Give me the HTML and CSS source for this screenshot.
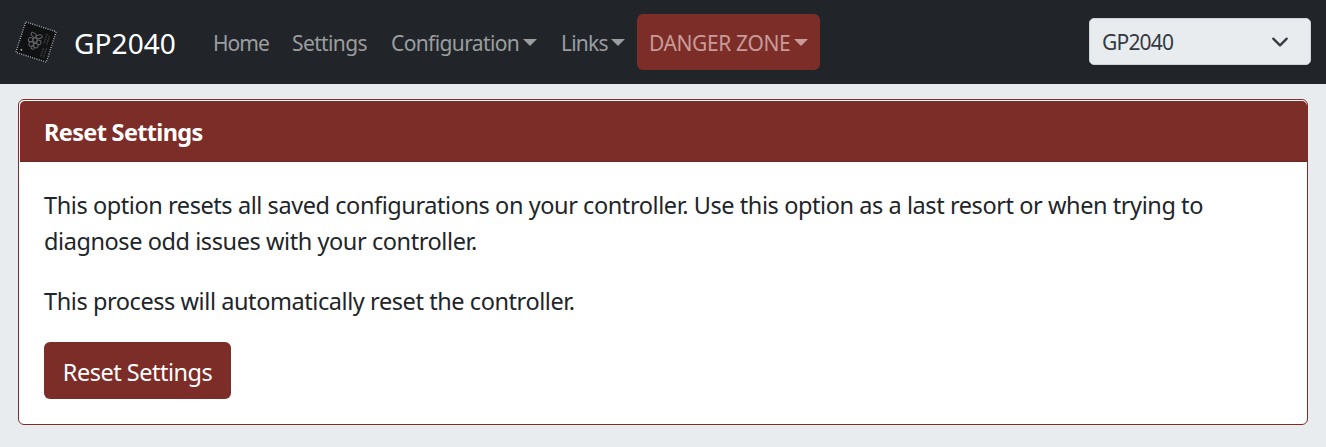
FILE: index.html
```
<!DOCTYPE html>
<html lang="en">
<head>
<meta charset="utf-8">
<title>GP2040 Configurator</title>
<link rel="stylesheet" href="styles.css">
</head>
<body>
<nav class="navbar">
  <a class="brand"><svg class="logo" viewBox="0 0 48 48" width="48" height="48">
    <g transform="translate(24 24) rotate(18)">
      <rect x="-16" y="-16" width="32" height="32" fill="#101113"/>
      <rect x="-16" y="-16" width="32" height="32" fill="none" stroke="#a4a8ac" stroke-width="1.4" stroke-dasharray="1 1.29"/>
      <g fill="none" stroke="#626365" stroke-width="1">
        <ellipse cx="-4.3" cy="-6" rx="3.2" ry="1.8" transform="rotate(25 -4.3 -6)"/>
        <ellipse cx="1.3" cy="-6" rx="3.2" ry="1.8" transform="rotate(-25 1.3 -6)"/>
        <circle cx="-1.5" cy="-1.5" r="2.2"/><circle cx="-5.8" cy="-.5" r="2.2"/><circle cx="2.8" cy="-.5" r="2.2"/>
        <circle cx="-4" cy="3.4" r="2.3"/><circle cx="1" cy="3.4" r="2.3"/><circle cx="-1.5" cy="6.4" r="1.6"/>
      </g>
      <g fill="none" stroke="#3c3d3f" stroke-width="1.6" stroke-dasharray="1.5 .8"><path d="M8-11V-1M11-10V0M9 4V13M12 3V13"/></g>
      <circle cx="-11.5" cy="12" r="1" fill="#a7a396"/>
    </g>
  </svg><span class="brand-text">GP2040</span></a>
  <div class="links">
    <a class="link home"><span>Home</span></a>
    <a class="link settings"><span>Settings</span></a>
    <a class="link configuration"><span>Configuration</span><i class="caret"></i></a>
    <a class="link more"><span>Links</span><i class="caret"></i></a>
    <a class="link danger"><span>DANGER ZONE</span><i class="caret"></i></a>
  </div>
  <div class="select"><span>GP2040</span><svg width="18" height="18" viewBox="0 0 16 16"><path d="m2 5 6 6 6-6" fill="none" stroke="#343a40" stroke-width="2" stroke-linecap="round" stroke-linejoin="round"/></svg></div>
</nav>
<main class="card">
  <header class="card-header"><span>Reset Settings</span></header>
  <div class="card-body">
    <p>This option resets all saved configurations on your controller. Use this option as a last resort or when trying to<br>diagnose odd issues with your controller.</p>
    <p>This process will automatically reset the controller.</p>
    <button class="button" type="button">Reset Settings</button>
  </div>
</main>
</body>
</html>
```
FILE: styles.css
```
* { box-sizing: border-box; }
body { margin: 0; height: 447px; overflow: hidden; background: #e9ecef; color: #212529; font: 23.5px/36px "Noto Sans", sans-serif; white-space: nowrap; }
.navbar { display: flex; align-items: center; height: 84px; padding: 0 15px 0 12px; background: #212529; }
.brand { display: flex; align-items: center; width: 189px; color: #fff; font-size: 28px; }
.logo { flex: none; margin-right: 14px; }
.brand-text { letter-spacing: .1px; padding-top: 1px; }
.links { display: flex; flex: 1; }
.link { display: flex; align-items: center; height: 56px; padding: 1px 12px 0; color: #9b9d9f; font-size: 21px; letter-spacing: -.62px; border-radius: 6px; }
.home { width: 79px; letter-spacing: -1px; }
.settings { width: 99px; }
.configuration { width: 170px; }
.more { width: 88px; letter-spacing: -.8px; }
.danger { width: 183px; background: #7d2d27; color: #c89b98; letter-spacing: -.4px; }
.caret { margin-left: auto; border: 7px solid transparent; border-top-color: currentColor; border-bottom: 0; }
.select { display: flex; align-items: center; justify-content: space-between; width: 222px; height: 47px; margin-bottom: 1px; padding: 1px 21px 0 12px; background: #e9ecef; border: 1px solid #ced4da; border-radius: 5px; color: #343a40; font-size: 21px; letter-spacing: -.8px; }
.card { height: 326px; margin: 15px 18px 0; padding: 1px 0 0 1px; background: #fff; border: 1px solid #7d2d27; border-radius: 6px; }
.card-header { height: 61px; padding: 13px 24px 12px; background: #7d2d27; border-bottom: 1px solid #6d2722; border-radius: 5px 5px 0 0; color: #fff; font-weight: 700; letter-spacing: -.66px; }
.card-body { padding: 25px 24px; letter-spacing: -.424px; }
p { margin: 0 0 24px; }
.button { display: block; width: 187px; height: 57px; margin-top: -1px; padding: 3px 0 0; border: 0; border-radius: 6px; background: #7d2d27; color: #fff; font: inherit; letter-spacing: -.5px; }
```
